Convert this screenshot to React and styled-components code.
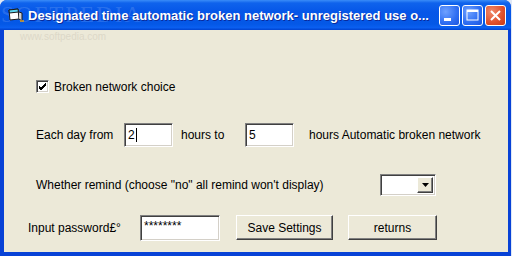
import React from "react";
import styled, { createGlobalStyle } from "styled-components";
// --------------------------
const Global = createGlobalStyle`
  html, body { margin: 0; padding: 0; background: #dfe8f6; }
  body { width: 512px; height: 256px; overflow: hidden; }
`;

const Window = styled.div`
  position: relative;
  width: 511px;
  height: 256px;
  box-sizing: border-box;
  display: flex;
  flex-direction: column;
  background: #0842d6;
  border-radius: 7px 7px 0 0;
  overflow: hidden;
  font-family: "Liberation Sans", Arial, sans-serif;
`;

const TitleBar = styled.div`
  position: relative;
  height: 30px;
  flex: none;
  display: flex;
  align-items: center;
  padding: 0 5px 0 8px;
  background: linear-gradient(
    to bottom,
    #3a8cf8 0%,
    #0f63ec 10%,
    #0656e8 40%,
    #0458e6 80%,
    #0a5ff0 92%,
    #0042cf 100%
  );
`;

const Watermark = styled.span`
  position: absolute;
  left: 1px;
  top: 3px;
  font-family: "Liberation Serif", serif;
  font-size: 23px;
  line-height: 24px;
  letter-spacing: 2px;
  color: rgba(255, 255, 255, 0.14);
  pointer-events: none;
`;

const Title = styled.span`
  position: relative;
  margin-left: 4px;
  flex: 1;
  color: #fff;
  font-weight: bold;
  font-size: 13px;
  white-space: nowrap;
  text-shadow: 1px 1px 0 #0a2a9a;
`;

const Controls = styled.div`
  display: flex;
  gap: 2px;
`;

const CtlButton = styled.div`
  width: 21px;
  height: 21px;
  box-sizing: border-box;
  border: 1px solid #fff;
  border-radius: 3px;
  display: flex;
  align-items: center;
  justify-content: center;
  background: ${({ $close }) =>
    $close
      ? "radial-gradient(circle at 30% 30%, #f08a6c, #e0502c 60%, #c93a16)"
      : "radial-gradient(circle at 30% 30%, #6fa1ff, #2f6ef2 60%, #1c55de)"};
`;

const Body = styled.div`
  position: relative;
  flex: 1;
  margin: 0 3px 4px 4px;
  background: #ece9d8;
  display: flex;
  flex-direction: column;
  font-size: 12px;
  color: #000;
`;

const SiteMark = styled.span`
  position: absolute;
  left: 16px;
  top: 1px;
  font-size: 10px;
  line-height: 11px;
  color: #dcd8c8;
`;

const Row = styled.div`
  display: flex;
  align-items: center;
  margin-top: ${({ $top }) => $top}px;
  padding-left: ${({ $left }) => $left}px;
  height: ${({ $h }) => $h}px;
`;

const Label = styled.span`
  width: ${({ $w }) => ($w ? `${$w}px` : "auto")};
  margin-left: ${({ $ml }) => $ml || 0}px;
  white-space: nowrap;
  flex: none;
`;

const Check = styled.div`
  width: 13px;
  height: 13px;
  box-sizing: border-box;
  border-top: 1px solid #808080;
  border-left: 1px solid #808080;
  border-bottom: 1px solid #fff;
  border-right: 1px solid #fff;
  box-shadow: inset 1px 1px 0 #404040, inset -1px -1px 0 #d4d0c8;
  background: #fff;
  display: flex;
  align-items: center;
  justify-content: center;
  margin-right: 5px;
`;

const Field = styled.div`
  width: ${({ $w }) => $w}px;
  height: ${({ $h }) => $h}px;
  box-sizing: border-box;
  border-top: 1px solid #808080;
  border-left: 1px solid #808080;
  border-bottom: 1px solid #fff;
  border-right: 1px solid #fff;
  box-shadow: inset 1px 1px 0 #404040, inset -1px -1px 0 #d4d0c8;
  background: #fff;
  padding: ${({ $pt }) => $pt ?? 4}px 0 0 3px;
  margin-left: ${({ $ml }) => $ml || 0}px;
  font-size: 12px;
  line-height: 14px;
  flex: none;
  display: flex;
  align-items: flex-start;
`;

const Caret = styled.span`
  display: inline-block;
  width: 1px;
  height: 14px;
  background: #000;
  margin-left: 1px;
`;

const Select = styled.div`
  width: 56px;
  height: 22px;
  box-sizing: border-box;
  border-top: 1px solid #808080;
  border-left: 1px solid #808080;
  border-bottom: 1px solid #fff;
  border-right: 1px solid #fff;
  box-shadow: inset 1px 1px 0 #404040, inset -1px -1px 0 #d4d0c8;
  background: #fff;
  display: flex;
  justify-content: flex-end;
  padding: 2px;
  flex: none;
`;

const Arrow = styled.div`
  width: 16px;
  height: 100%;
  box-sizing: border-box;
  background: #ece9d8;
  border-top: 1px solid #fff;
  border-left: 1px solid #fff;
  border-right: 1px solid #404040;
  border-bottom: 1px solid #404040;
  box-shadow: inset -1px -1px 0 #808080;
  display: flex;
  align-items: center;
  justify-content: center;
`;

const Button = styled.div`
  width: ${({ $w }) => $w}px;
  height: 25px;
  box-sizing: border-box;
  margin-left: ${({ $ml }) => $ml}px;
  background: #ece9d8;
  border-top: 1px solid #fff;
  border-left: 1px solid #fff;
  border-right: 1px solid #404040;
  border-bottom: 1px solid #404040;
  box-shadow: inset -1px -1px 0 #808080;
  display: flex;
  align-items: center;
  justify-content: center;
  font-size: 12px;
  flex: none;
`;
// --------------------------

const AppIcon = () => (
  <svg width="16" height="16" viewBox="0 0 16 16" style={{ position: "relative" }}>
    <path d="M1 3 L10 2 L11 12 L2 13 Z" fill="#fff" stroke="#1a1a1a" strokeWidth="1" />
    <path d="M1 3 L10 2 L10.4 5 L1.4 6 Z" fill="#5ed6f0" stroke="#1a1a1a" strokeWidth="1" />
    <path d="M11 5 L14 6 L14 14 L11 12" fill="#d0d0d0" stroke="#1a1a1a" strokeWidth="1" />
    <path d="M12 14 L16 14" stroke="#e0a020" strokeWidth="1.5" />
  </svg>
);

const App = () => {
  return (
    <>
      <Global />
      <Window>
        <TitleBar>
          <Watermark>SOFTPEDIA</Watermark>
          <AppIcon />
          <Title>Designated time automatic broken network- unregistered use o...</Title>
          <Controls>
            <CtlButton>
              <svg width="19" height="19" viewBox="0 0 19 19">
                <rect x="4" y="12" width="7" height="3" fill="#fff" />
              </svg>
            </CtlButton>
            <CtlButton>
              <svg width="19" height="19" viewBox="0 0 19 19">
                <rect x="4" y="4" width="11" height="10" fill="none" stroke="#fff" strokeWidth="1" />
                <rect x="4" y="4" width="11" height="2" fill="#fff" />
              </svg>
            </CtlButton>
            <CtlButton $close>
              <svg width="19" height="19" viewBox="0 0 19 19">
                <path d="M5 5 L14 14 M14 5 L5 14" stroke="#fff" strokeWidth="2" />
              </svg>
            </CtlButton>
          </Controls>
        </TitleBar>
        <Body>
          <SiteMark>www.softpedia.com</SiteMark>
          <Row $top={50} $left={32} $h={13}>
            <Check>
              <svg width="9" height="9" viewBox="0 0 9 9">
                <path d="M1 4 L3 6 L8 1 M1 5 L3 7 L8 2 M1 6 L3 8 L8 3" stroke="#000" strokeWidth="1" fill="none" />
              </svg>
            </Check>
            <Label>Broken network choice</Label>
          </Row>
          <Row $top={30} $left={32} $h={24}>
            <Label $w={88}>Each day from</Label>
            <Field $w={49} $h={24}>
              2<Caret />
            </Field>
            <Label $ml={8} $w={64}>hours to</Label>
            <Field $w={49} $h={24}>5</Field>
            <Label $ml={15}>hours Automatic broken network</Label>
          </Row>
          <Row $top={27} $left={32} $h={22}>
            <Label $w={344}>Whether remind (choose "no" all remind won't display)</Label>
            <Select>
              <Arrow>
                <svg width="7" height="4" viewBox="0 0 7 4">
                  <path d="M0 0 L7 0 L3.5 4 Z" fill="#000" />
                </svg>
              </Arrow>
            </Select>
          </Row>
          <Row $top={18} $left={24} $h={27}>
            <Label $w={112}>Input password£°</Label>
            <Field $w={80} $h={26} $pt={3}>********</Field>
            <Button $w={97} $ml={16}>Save Settings</Button>
            <Button $w={89} $ml={15}>returns</Button>
          </Row>
        </Body>
      </Window>
    </>
  );
};
// --------------------------
export default App;
